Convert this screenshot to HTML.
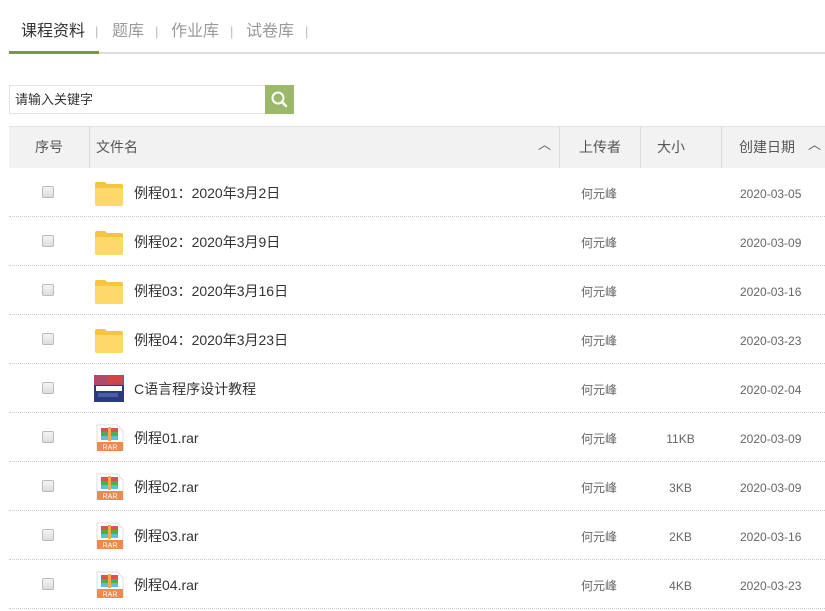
<!DOCTYPE html>
<html><head><meta charset="utf-8"><style>
*{margin:0;padding:0;box-sizing:border-box}
body{width:825px;height:611px;background:#fff;font-family:"Liberation Sans","Noto Sans CJK SC",sans-serif;color:#333;position:relative;overflow:hidden}
.a{position:absolute}
.tab{top:22px;font-size:16px;color:#999;line-height:20px}
.sep{top:24px;font-size:13px;color:#bbb}
.row{position:absolute;left:9px;width:816px;height:49px;border-bottom:1px dotted #ccc}
.cb{position:absolute;left:33px;top:18px;width:12px;height:12px;border:1px solid #bbb;border-radius:2px;background:linear-gradient(#f4f4f4,#ddd)}
.name{position:absolute;left:125px;top:15px;font-size:14px;color:#333}
.up{position:absolute;left:572px;top:17px;font-size:12px;color:#666}
.sz{position:absolute;left:631px;width:81px;text-align:center;top:19px;font-size:12px;color:#666}
.dt{position:absolute;left:731px;top:19px;font-size:12px;color:#666}
.ic{position:absolute;left:85px;top:11px;width:30px;height:27px}
.hd{position:absolute;top:127px;height:41px;background:#f2f2f2;font-size:14px;color:#555;line-height:41px;border-left:1px solid #ddd}
</style></head><body>
<div class="a tab" style="left:21px;color:#333">课程资料</div>
<div class="a sep" style="left:95px">|</div>
<div class="a tab" style="left:112px">题库</div>
<div class="a sep" style="left:155px">|</div>
<div class="a tab" style="left:171px">作业库</div>
<div class="a sep" style="left:230px">|</div>
<div class="a tab" style="left:246px">试卷库</div>
<div class="a sep" style="left:305px">|</div>
<div class="a" style="left:99px;top:52px;width:726px;height:2px;background:#ddd"></div>
<div class="a" style="left:9px;top:51px;width:90px;height:3px;background:#7a9a3a"></div>

<div class="a" style="left:9px;top:85px;width:257px;height:29px;border:1px solid #e2e2e2;border-right:none;font-size:13px;line-height:27px;padding-left:5px;color:#333">请输入关键字</div>
<div class="a" style="left:265px;top:85px;width:29px;height:29px;background:#9cb86a">
<svg width="29" height="29" viewBox="0 0 29 29"><circle cx="13" cy="13" r="5.5" fill="none" stroke="#fff" stroke-width="2"/><line x1="17" y1="17" x2="21" y2="21" stroke="#fff" stroke-width="2.4" stroke-linecap="round"/></svg></div>

<div class="a" style="left:9px;top:126px;width:816px;height:1px;background:#e2e2e2"></div>
<div class="hd" style="left:9px;width:80px;text-align:center;border-left:none">序号</div>
<div class="hd" style="left:89px;width:470px;padding-left:6px">文件名<span style="position:absolute;right:8px;top:-3px;font-size:13px">︿</span></div>
<div class="hd" style="left:559px;width:81px;text-align:center">上传者</div>
<div class="hd" style="left:640px;width:81px;padding-left:16px">大小</div>
<div class="hd" style="left:721px;width:104px;padding-left:17px">创建日期<span style="position:absolute;right:4px;top:-3px;font-size:13px">︿</span></div>

<svg width="0" height="0" style="position:absolute"><defs>
<g id="fold"><path d="M1 5 Q1 3 3 3 L11 3 L13 5 L27 5 Q29 5 29 7 L29 25 Q29 27 27 27 L3 27 Q1 27 1 25Z" fill="#f5c542"/><path d="M1 9 L29 9 L29 25 Q29 27 27 27 L3 27 Q1 27 1 25Z" fill="#fdd86a"/></g>
<g id="rar"><path d="M3 1 L23 1 L29 7 L29 26 L3 26Z" fill="#fff" stroke="#ddd"/><rect x="7" y="4" width="17" height="4" fill="#d9534f"/><rect x="7" y="8" width="17" height="4" fill="#4cae4c"/><rect x="7" y="12" width="17" height="4" fill="#5bc0de"/><rect x="14" y="3" width="3" height="14" fill="#f0ad4e"/><rect x="3" y="18" width="26" height="9" fill="#ef8a4e"/><text x="16" y="25.5" font-size="7" fill="#fff" text-anchor="middle" font-family="Liberation Sans">RAR</text></g>
</defs></svg>

<div class="row" style="top:168px"><div class="cb"></div><svg class="ic"><use href="#fold"/></svg><div class="name">例程01：2020年3月2日</div><div class="up">何元峰</div><div class="dt">2020-03-05</div></div>
<div class="row" style="top:217px"><div class="cb"></div><svg class="ic"><use href="#fold"/></svg><div class="name">例程02：2020年3月9日</div><div class="up">何元峰</div><div class="dt">2020-03-09</div></div>
<div class="row" style="top:266px"><div class="cb"></div><svg class="ic"><use href="#fold"/></svg><div class="name">例程03：2020年3月16日</div><div class="up">何元峰</div><div class="dt">2020-03-16</div></div>
<div class="row" style="top:315px"><div class="cb"></div><svg class="ic"><use href="#fold"/></svg><div class="name">例程04：2020年3月23日</div><div class="up">何元峰</div><div class="dt">2020-03-23</div></div>
<div class="row" style="top:364px"><div class="cb"></div><svg class="ic" viewBox="0 0 30 27"><rect x="0" y="0" width="30" height="27" fill="#2b3a7a"/><rect x="0" y="0" width="30" height="10" fill="#b04a6a"/><rect x="14" y="1" width="14" height="7" fill="#d64545"/><rect x="2" y="11" width="26" height="5" fill="#fff"/><rect x="4" y="18" width="20" height="4" fill="#4a5ea8"/></svg><div class="name">C语言程序设计教程</div><div class="up">何元峰</div><div class="dt">2020-02-04</div></div>
<div class="row" style="top:413px"><div class="cb"></div><svg class="ic"><use href="#rar"/></svg><div class="name">例程01.rar</div><div class="up">何元峰</div><div class="sz">11KB</div><div class="dt">2020-03-09</div></div>
<div class="row" style="top:462px"><div class="cb"></div><svg class="ic"><use href="#rar"/></svg><div class="name">例程02.rar</div><div class="up">何元峰</div><div class="sz">3KB</div><div class="dt">2020-03-09</div></div>
<div class="row" style="top:511px"><div class="cb"></div><svg class="ic"><use href="#rar"/></svg><div class="name">例程03.rar</div><div class="up">何元峰</div><div class="sz">2KB</div><div class="dt">2020-03-16</div></div>
<div class="row" style="top:560px"><div class="cb"></div><svg class="ic"><use href="#rar"/></svg><div class="name">例程04.rar</div><div class="up">何元峰</div><div class="sz">4KB</div><div class="dt">2020-03-23</div></div>
</body></html>
